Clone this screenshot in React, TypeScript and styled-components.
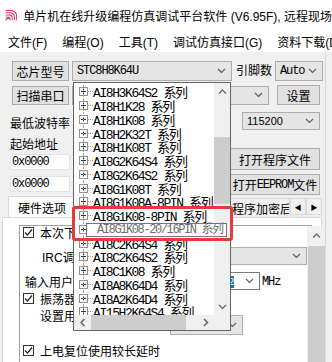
import React from "react";
import styled, { createGlobalStyle } from "styled-components";

const ui = `"Liberation Sans", "Noto Sans CJK SC", sans-serif`;
const song = `"Liberation Mono", "Noto Sans CJK SC", monospace`;

const GlobalStyle = createGlobalStyle`
  html, body {
    margin: 0;
    padding: 0;
    background: #f0f0f0;
  }
  body {
    width: 332px;
    height: 362px;
    overflow: hidden;
    font-family: ${ui};
    font-size: 12px;
    color: #000;
  }
  * {
    box-sizing: border-box;
  }
`;

const Window = styled.div`
  position: relative;
  width: 332px;
  height: 362px;
  overflow: hidden;
  background: #f0f0f0;
`;

const TitleBar = styled.div`
  height: 28px;
  background: #fff;
  display: flex;
  align-items: center;
  gap: 6px;
  padding: 2px 0 0 5px;
  white-space: nowrap;
`;

const MenuBar = styled.div`
  height: 24px;
  background: #fff;
  display: flex;
  align-items: center;
  gap: 15px;
  padding: 3px 0 0 8px;
  white-space: nowrap;
`;

const Body = styled.div`
  padding-top: 9px;
  border-right: 1px solid #d9d9d9;
  width: 326px;
  height: 310px;
`;

const Row = styled.div<{ $h: number; $mt?: number; $pl?: number; $top?: boolean }>`
  display: flex;
  align-items: ${(p) => (p.$top ? "flex-start" : "center")};
  height: ${(p) => p.$h}px;
  margin-top: ${(p) => p.$mt ?? 0}px;
  padding-left: ${(p) => p.$pl ?? 0}px;
  white-space: nowrap;
  flex-shrink: 0;
`;

const Button = styled.div<{ $w: number; $h: number; $ml?: number; $mt?: number }>`
  width: ${(p) => p.$w}px;
  height: ${(p) => p.$h}px;
  margin-left: ${(p) => p.$ml ?? 0}px;
  margin-top: ${(p) => p.$mt ?? 0}px;
  flex-shrink: 0;
  background: #e1e1e1;
  border: 1px solid #adadad;
  display: flex;
  align-items: center;
  justify-content: center;
  white-space: nowrap;
  overflow: hidden;
`;

const Mono = styled.span`
  font-family: ${song};
  letter-spacing: -1.1px;
`;

const ComboBox = styled.div<{ $w: number; $h: number; $ml?: number; $mt?: number; $white?: boolean }>`
  width: ${(p) => p.$w}px;
  height: ${(p) => p.$h}px;
  margin-left: ${(p) => p.$ml ?? 0}px;
  margin-top: ${(p) => p.$mt ?? 0}px;
  flex-shrink: 0;
  background: ${(p) => (p.$white ? "#fff" : "#e5e5e5")};
  border: 1px solid ${(p) => (p.$white ? "#7a7a7a" : "#adadad")};
  display: flex;
  align-items: center;
  padding: 0 5px 0 4px;
  overflow: hidden;
`;

const ComboText = styled.span<{ $mono?: boolean }>`
  flex: 1;
  font-family: ${(p) => (p.$mono ? song : ui)};
  font-size: ${(p) => (p.$mono ? "12px" : "11px")};
  letter-spacing: ${(p) => (p.$mono ? "-1.1px" : "0")};
`;

const Label = styled.span<{ $w?: number; $ml?: number; $mt?: number }>`
  display: inline-block;
  width: ${(p) => (p.$w ? `${p.$w}px` : "auto")};
  margin-left: ${(p) => p.$ml ?? 0}px;
  margin-top: ${(p) => p.$mt ?? 0}px;
  flex-shrink: 0;
  line-height: 16px;
  white-space: nowrap;
  overflow: hidden;
`;

const TextBox = styled.div<{ $mt: number }>`
  width: 60px;
  height: 16px;
  margin-top: ${(p) => p.$mt}px;
  background: #fff;
  border: 1px solid #e3e3e3;
  font-family: ${song};
  letter-spacing: -1.1px;
  line-height: 14px;
  padding-left: 1px;
`;

const Lower = styled.div`
  display: flex;
  padding-left: 10px;
`;

const Stack = styled.div<{ $w: number }>`
  width: ${(p) => p.$w}px;
  display: flex;
  flex-direction: column;
`;

const TabControl = styled.div`
  margin: 1px 0 0 2px;
  width: 320px;
`;

const TabStrip = styled.div`
  height: 21px;
  display: flex;
  align-items: flex-end;
`;

const Tab = styled.div<{ $w: number; $ml?: number; $pl?: number; $active?: boolean }>`
  width: ${(p) => p.$w}px;
  margin-left: ${(p) => p.$ml ?? 0}px;
  height: ${(p) => (p.$active ? 21 : 19)}px;
  background: ${(p) => (p.$active ? "#fff" : "#f0f0f0")};
  border: 1px solid #d9d9d9;
  border-bottom: none;
  display: flex;
  align-items: center;
  padding-left: ${(p) => p.$pl ?? 9}px;
  white-space: nowrap;
  overflow: hidden;
  flex-shrink: 0;
`;

const TabArrows = styled.div`
  display: flex;
  margin-bottom: 2px;
`;

const TabArrow = styled.div`
  width: 16px;
  height: 17px;
  border: 1px solid #d9d9d9;
  background: #f0f0f0;
  display: flex;
  align-items: center;
  justify-content: center;
  font-size: 7px;
`;

const TabPage = styled.div`
  height: 146px;
  background: #fff;
  border: 1px solid #d9d9d9;
  padding: 7px 9px 0 16px;
`;

const InnerPanel = styled.div`
  height: 150px;
  border: 1px solid #a0a0a0;
  border-bottom: none;
  display: grid;
  grid-template-columns: 1fr 18px;
`;

const PanelBody = styled.div`
  padding: 0 0 0 3px;
  display: flex;
  flex-direction: column;
`;

const Check = styled.span`
  width: 11px;
  height: 11px;
  border: 1px solid #333;
  background: #fff;
  flex-shrink: 0;
  display: flex;
  align-items: center;
  justify-content: center;
  margin-right: 6px;
`;

const VBar = styled.div<{ $w: number }>`
  width: ${(p) => p.$w}px;
  background: #f0f0f0;
  display: flex;
  flex-direction: column;
`;

const HBar = styled.div`
  background: #f0f0f0;
  display: flex;
`;

const ArrowCell = styled.div<{ $h: number; $w?: number }>`
  height: ${(p) => p.$h}px;
  width: ${(p) => (p.$w ? `${p.$w}px` : "auto")};
  display: flex;
  align-items: center;
  justify-content: center;
  flex-shrink: 0;
`;

const Thumb = styled.div<{ $mt?: number; $h?: number; $ml?: number; $w?: number }>`
  background: #cdcdcd;
  margin-top: ${(p) => p.$mt ?? 0}px;
  margin-left: ${(p) => p.$ml ?? 0}px;
  height: ${(p) => (p.$h ? `${p.$h}px` : "auto")};
  width: ${(p) => (p.$w ? `${p.$w}px` : "auto")};
  flex-shrink: 0;
`;

const Spacer = styled.div`
  flex: 1;
`;

const MHz = styled.span`
  font-family: ${song};
  letter-spacing: -1.1px;
  margin: 3px 0 0 2px;
`;

const Selected = styled.span`
  background: #0078d7;
  color: #fff;
  font-family: ${song};
  letter-spacing: -1.1px;
`;

/* ----- chip dropdown ----- */

const DropList = styled.div`
  position: absolute;
  left: 73px;
  top: 82px;
  width: 158px;
  height: 249px;
  border: 1px solid #646464;
  background: #fff;
  display: grid;
  grid-template-columns: 140px 16px;
  grid-template-rows: 232px 15px;
  z-index: 5;
`;

const ListArea = styled.div`
  overflow: hidden;
  padding-top: 2px;
`;

const TreeRow = styled.div`
  position: relative;
  height: 13.75px;
  display: flex;
  align-items: center;
  padding-left: 5px;
  white-space: nowrap;
  &::before {
    content: "";
    position: absolute;
    left: 9px;
    top: 0;
    bottom: 0;
    border-left: 1px dotted #a0a0a0;
  }
`;

const Connector = styled.span`
  width: 5px;
  border-top: 1px dotted #a0a0a0;
`;

const ItemText = styled.span`
  font-family: ${song};
  font-size: 13px;
  letter-spacing: -1.4px;
`;

const Corner = styled.div`
  background: #f0f0f0;
`;

const Tooltip = styled.div`
  position: absolute;
  left: 86px;
  top: 223px;
  width: 141px;
  height: 14px;
  border: 1px solid #767676;
  background: #fff;
  color: #6d6d6d;
  font-family: ${song};
  font-size: 12px;
  letter-spacing: -1.4px;
  line-height: 12px;
  padding-left: 10px;
  white-space: nowrap;
  z-index: 6;
`;

const Highlight = styled.div`
  position: absolute;
  left: 72px;
  top: 206px;
  width: 161px;
  height: 35px;
  border: 3px solid #e53b3b;
  border-radius: 3px;
  z-index: 7;
`;

const Chevron = ({ dir = "down" }: { dir?: "down" | "up" }) => (
  <svg width="9" height="6" viewBox="0 0 9 6">
    <polyline
      points={dir === "down" ? "1,1 4.5,4.5 8,1" : "1,4.5 4.5,1 8,4.5"}
      fill="none"
      stroke="#606060"
      strokeWidth="1.2"
    />
  </svg>
);

const SideChevron = ({ dir }: { dir: "left" | "right" }) => (
  <svg width="6" height="9" viewBox="0 0 6 9">
    <polyline
      points={dir === "left" ? "4.5,1 1,4.5 4.5,8" : "1,1 4.5,4.5 1,8"}
      fill="none"
      stroke="#606060"
      strokeWidth="1.5"
    />
  </svg>
);

const PlusBox = () => (
  <svg width="9" height="9" viewBox="0 0 9 9" style={{ flexShrink: 0 }}>
    <rect x="0.5" y="0.5" width="8" height="8" fill="#fff" stroke="#919191" />
    <line x1="2" y1="4.5" x2="7" y2="4.5" stroke="#333" />
    <line x1="4.5" y1="2" x2="4.5" y2="7" stroke="#333" />
  </svg>
);

const Tick = () => (
  <svg width="9" height="9" viewBox="0 0 9 9">
    <polyline points="1,4.5 3.5,7 8,1.5" fill="none" stroke="#222" strokeWidth="1.2" />
  </svg>
);

const Logo = () => (
  <svg width="19" height="18" viewBox="0 0 19 18">
    <path d="M1 2 H9 A9 9 0 0 1 18 11 V17" fill="none" stroke="#e8304a" strokeWidth="1.6" />
    <path d="M1 5.5 H8 A6.5 6.5 0 0 1 14.5 12 V17" fill="none" stroke="#e8304a" strokeWidth="1.6" />
    <path d="M1 9 H7 A4 4 0 0 1 11 13 V17" fill="none" stroke="#e8304a" strokeWidth="1.6" />
    <path d="M1 12.5 H6 A1.5 1.5 0 0 1 7.5 14 V17" fill="none" stroke="#e8304a" strokeWidth="1.6" />
    <path d="M1 17 Q3 13 7 15" fill="none" stroke="#2450c8" strokeWidth="1.6" />
  </svg>
);

const chips = [
  "AI8H3K64S2",
  "AI8H1K28",
  "AI8H1K08",
  "AI8H2K32T",
  "AI8H1K08T",
  "AI8G2K64S4",
  "AI8G2K64S2",
  "AI8G1K08T",
  "AI8G1K08A-8PIN",
  "AI8G1K08-8PIN",
  "AI8G1K08-20/16PIN",
  "AI8C2K64S4",
  "AI8C2K64S2",
  "AI8C1K08",
  "AI8A8K64D4",
  "AI8A2K64D4",
  "AI15H2K64S4",
  "AI15H2K64S2",
];

const menus = ["文件(F)", "编程(O)", "工具(T)", "调试仿真接口(G)", "资料下载(D)"];

export default function App() {
  return (
    <Window>
      <GlobalStyle />
      <TitleBar>
        <Logo />
        <span>单片机在线升级编程仿真调试平台软件 (V6.95F), 远程现场</span>
      </TitleBar>
      <MenuBar>
        {menus.map((m) => (
          <span key={m}>{m}</span>
        ))}
      </MenuBar>

      <Body>
        <Row $h={20} $pl={12}>
          <Button $w={57} $h={20}>芯片型号</Button>
          <ComboBox $w={160} $h={20} $ml={3}>
            <ComboText $mono>STC8H8K64U</ComboText>
            <Chevron />
          </ComboBox>
          <Label $ml={4}>引脚数</Label>
          <ComboBox $w={48} $h={20} $ml={3}>
            <ComboText $mono>Auto</ComboText>
            <Chevron />
          </ComboBox>
        </Row>
        <Row $h={20} $mt={4} $pl={12}>
          <Button $w={57} $h={19}>扫描串口</Button>
          <ComboBox $w={197} $h={19} $ml={3}>
            <ComboText>COM3</ComboText>
            <Chevron />
          </ComboBox>
          <Button $w={43} $h={20} $ml={8}>设置</Button>
        </Row>

        <Lower>
          <Stack $w={62}>
            <Row $h={16} $mt={9}>最低波特率</Row>
            <Row $h={16} $mt={5}>起始地址</Row>
            <TextBox $mt={3}>0x0000</TextBox>
            <TextBox $mt={6}>0x0000</TextBox>
          </Stack>
          <Stack $w={248}>
            <Row $h={18} $mt={7}>
              <ComboBox $w={80} $h={18} $ml={4}>
                <ComboText>2400</ComboText>
                <Chevron />
              </ComboBox>
              <Label $w={80} $ml={6}>最高波特率</Label>
              <ComboBox $w={78} $h={18}>
                <ComboText>115200</ComboText>
                <Chevron />
              </ComboBox>
            </Row>
            <Button $w={90} $h={22} $ml={158} $mt={18}>打开程序文件</Button>
            <Button $w={90} $h={21} $ml={158} $mt={4}>
              打开<Mono>EEPROM</Mono>文件
            </Button>
          </Stack>
        </Lower>

        <TabControl>
          <TabStrip>
            <Tab $w={70} $ml={6} $active>硬件选项</Tab>
            <Tab $w={74}>收到的数据</Tab>
            <Tab $w={74}>自定义加密下载</Tab>
            <Tab $w={64} $pl={5}>程序加密后</Tab>
            <TabArrows>
              <TabArrow>◀</TabArrow>
              <TabArrow>▶</TabArrow>
            </TabArrows>
          </TabStrip>
          <TabPage>
            <InnerPanel>
              <PanelBody>
                <Row $h={12}>
                  <Check><Tick /></Check>
                  本次下载需要修改硬件选项
                </Row>
                <Row $h={20} $mt={9} $pl={19} $top>
                  <Label $w={108} $mt={3}>IRC调节频率:</Label>
                  <ComboBox $w={157} $h={18}>
                    <ComboText>24.000MHz</ComboText>
                    <Chevron />
                  </ComboBox>
                </Row>
                <Row $h={20} $mt={5} $pl={2} $top>
                  <Label $w={165} $mt={3}>输入用户自定义频率</Label>
                  <ComboBox $w={70} $h={18} $white>
                    <ComboText>
                      <Selected>11.0592</Selected>
                    </ComboText>
                    <Chevron />
                  </ComboBox>
                  <MHz>MHz</MHz>
                </Row>
                <Row $h={12}>
                  <Check><Tick /></Check>
                  振荡器放大增益(12M以上建议选择)
                </Row>
                <Row $h={26} $mt={5} $pl={17} $top>
                  <Label $w={130}>设置用户EEPROM大小</Label>
                  <ComboBox $w={73} $h={20} $mt={6}>
                    <ComboText>0.5K</ComboText>
                    <Chevron />
                  </ComboBox>
                </Row>
                <Row $h={18} $mt={6}>
                  <Check><Tick /></Check>
                  上电复位使用较长延时
                </Row>
              </PanelBody>
              <VBar $w={18}>
                <ArrowCell $h={20}>
                  <Chevron dir="up" />
                </ArrowCell>
                <Thumb $h={130} $ml={1} />
              </VBar>
            </InnerPanel>
          </TabPage>
        </TabControl>
      </Body>

      <DropList>
        <ListArea>
          {chips.map((c) => (
            <TreeRow key={c}>
              <PlusBox />
              <Connector />
              <ItemText>{c} 系列</ItemText>
            </TreeRow>
          ))}
        </ListArea>
        <VBar $w={16}>
          <ArrowCell $h={17}>
            <Chevron dir="up" />
          </ArrowCell>
          <Thumb $mt={37} $h={67} />
          <Spacer />
          <ArrowCell $h={17}>
            <Chevron />
          </ArrowCell>
        </VBar>
        <HBar>
          <ArrowCell $h={15} $w={17}>
            <SideChevron dir="left" />
          </ArrowCell>
          <Thumb $w={95} />
          <Spacer />
          <ArrowCell $h={15} $w={17}>
            <SideChevron dir="right" />
          </ArrowCell>
        </HBar>
        <Corner />
      </DropList>
      <Tooltip>AI8G1K08-20/16PIN 系列</Tooltip>
      <Highlight />
    </Window>
  );
}
